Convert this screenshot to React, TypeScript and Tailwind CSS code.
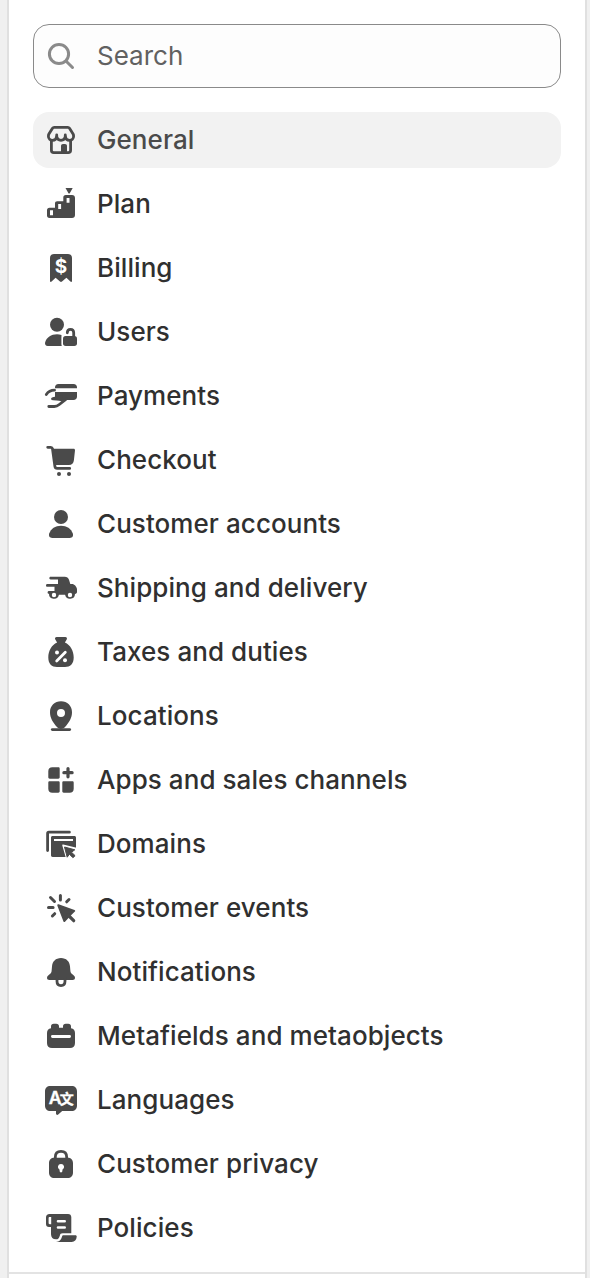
import type { ReactNode } from 'react'

type NavItem = {
  label: string
  icon: ReactNode
}

const line = {
  fill: 'none',
  stroke: 'currentColor',
  strokeWidth: 2.8,
  strokeLinecap: 'round',
  strokeLinejoin: 'round',
} as const

const navItems: NavItem[] = [
  {
    label: 'General',
    icon: (
      <>
        <path {...line} d="M13.2 7.4h13.6c.8 0 1.3.3 1.7.9l3.6 5.7c.4.7.5 1.4.5 2.2 0 2.500-1.900 4.100-4.100 4.100-2.200 0-3.900-1.500-4.200-3.500-.4 2-2.100 3.500-4.300 3.500s-3.900-1.500-4.300-3.500c-.3 2-2 3.500-4.200 3.500s-4.100-1.600-4.100-4.100c0-.8.1-1.500.5-2.200l3.600-5.700c.4-.6.9-.9 1.700-.9Z" />
        <path {...line} d="M15.700 15v2M24.300 15v2M10.400 20.500v9.700c0 1.500.9 2.400 2.400 2.400h14.400c1.500 0 2.400-.9 2.400-2.400v-9.700" />
        <path d="M20 26c0-1.200.8-2 2-2h2c1.200 0 2 .8 2 2v7h-6Z" />
      </>
    ),
  },
  {
    label: 'Plan',
    icon: (
      <>
        <path d="M24.500 4h7.200l-2.800 4.900c-.4.7-1.200.7-1.600 0Z" />
        <path
          fillRule="evenodd"
          d="M8.500 23.700H14v-4.200c0-1.400.8-2.200 2.200-2.200h6.100v-3.800c0-1.600.9-2.500 2.500-2.500h6.200c1.900 0 3 1.100 3 3v17c0 1.900-1.100 3-3 3H8.500C6.900 34 6 33.100 6 31.500v-5.300c0-1.600.9-2.500 2.500-2.500ZM9 26.300v5h3v-5ZM17.200 20v5h2.900v-5ZM25.600 14v4.800h2.900V14Z"
        />
      </>
    ),
  },
  {
    label: 'Billing',
    icon: (
      <>
        <path d="M9 10c0-2.500 1.500-4 4-4h14c2.500 0 4 1.500 4 4v23c0 1-.9 1.300-1.600.6l-4-3.800-4.400 3.700c-.7.500-1.300.500-2 0l-4.400-3.700-4 3.800C9.900 34.300 9 34 9 33Z" />
        <text x="20" y="24.800" textAnchor="middle" fill="white" fontSize="19" fontWeight="700">$</text>
      </>
    ),
  },
  {
    label: 'Users',
    icon: (
      <>
        <circle cx="16" cy="12.700" r="7" />
        <path d="M20.500 22.900c-1.400-.4-2.900-.6-4.500-.6-5.800 0-10.600 3.300-11.900 8.200-.5 1.900.7 3.500 2.700 3.500h14c-.3-.7-.4-1.300-.4-2v-5.500c0-1.200.1-2.300.1-3.600Z" />
        <rect x="22" y="24" width="14" height="10" rx="2.700" />
        <path {...line} d="M26.300 20.800c0-2.200 1.200-3.500 3.200-3.500s3.200 1.300 3.200 3.500V25" />
      </>
    ),
  },
  {
    label: 'Payments',
    icon: (
      <>
        <path d="M14 12.300V11.500C14 9.300 15.300 8 17.500 8h15c2.200 0 3.500 1.300 3.500 3.500v.8Z" />
        <path d="M14 16h22v4.500c0 2.200-1.300 3.500-3.500 3.500H20l-6-2Z" />
        <path {...line} d="M5.300 18.500c2-3 4.200-4.300 8.200-4.300M11.500 22.800c3.200-1.200 5.500-1.700 8.700-1.700M7.800 30.500h5.500c2.200 0 3.300-.6 5-2l6.500-5.200" />
        <path d="M12 21.500h15l-5 4.500c-2-1-5-1.500-10-1.700Z" />
      </>
    ),
  },
  {
    label: 'Checkout',
    icon: (
      <>
        <path {...line} d="M6.700 7.300h3.100c1 0 1.500.5 1.700 1.500l2.400 17.600c.2 1.300.9 2 2.200 2h12.600" />
        <path d="M12 8.700h20.500c1 0 1.600.6 1.500 1.600l-1.100 10c-.3 3-2 4.700-5 4.700H13.500Z" />
        <circle cx="18" cy="34" r="2" />
        <circle cx="28" cy="34" r="2" />
      </>
    ),
  },
  {
    label: 'Customer accounts',
    icon: (
      <>
        <circle cx="20" cy="13" r="7" />
        <path d="M20 21.700c5.700 0 10.200 3 11.800 7.900.8 2.500-.5 4.400-3 4.400H11.200c-2.500 0-3.800-1.900-3-4.400 1.600-4.900 6.100-7.900 11.800-7.900Z" />
      </>
    ),
  },
  {
    label: 'Shipping and delivery',
    icon: (
      <>
        <path
          fillRule="evenodd"
          d="M9.600 8.700h14.100c2.200 0 3.600 1 4.300 3l1.300 4.300h1.500c1.500 0 2.500.5 3.400 1.600l1 1.300c.6.800.8 1.500.8 2.500v2.300c0 1.300-.7 2.100-2 2.300a5 5 0 0 1-9.900.8h-6.200a5 5 0 0 1-9.900-1.100c-1 0-1.400-.6-1.400-1.300s.6-1.300 1.400-1.300h5.500v-4.400H6.300c-.8 0-1.300-.6-1.300-1.300S5.500 16 6.300 16H17v-4.600H9.600c-.8 0-1.300-.6-1.300-1.300s.5-1.400 1.300-1.400ZM13 24.800a2.200 2.200 0 1 0 0 4.400 2.200 2.200 0 0 0 0-4.400Zm16 0a2.200 2.200 0 1 0 0 4.400 2.200 2.200 0 0 0 0-4.400Z"
        />
      </>
    ),
  },
  {
    label: 'Taxes and duties',
    icon: (
      <>
        <path d="M15.700 5h8.600c1.400 0 2.100 1.200 1.400 2.400l-1.800 3.200c5.500 2.400 8.800 8.500 8.800 14.900 0 6.500-3.500 9.500-8.700 9.500h-8c-5.200 0-8.700-3-8.700-9.500 0-6.400 3.300-12.500 8.800-14.900l-1.800-3.200C13.600 6.200 14.300 5 15.700 5Z" />
        <path {...line} stroke="white" d="m24.300 20.300-8.600 8.600" />
        <circle cx="16" cy="20.500" r="2" fill="white" />
        <circle cx="24" cy="28.300" r="2" fill="white" />
      </>
    ),
  },
  {
    label: 'Locations',
    icon: (
      <>
        <path
          fillRule="evenodd"
          d="M20 5.300c6.300 0 11 4.600 11 10.900 0 5.500-2.700 10-7.200 15.100-2.200 2.300-5.400 2.300-7.600 0C11.700 26.200 9 21.700 9 16.200 9 9.900 13.700 5.300 20 5.300Zm0 7.700a4 4 0 1 0 0 8 4 4 0 0 0 0-8Z"
        />
        <path {...line} d="M11.300 33.600h17.400" />
      </>
    ),
  },
  {
    label: 'Apps and sales channels',
    icon: (
      <>
        <path d="M11.300 7.300h6c.9 0 1.400.5 1.400 1.400v8.600c0 .9-.5 1.400-1.400 1.400H8.700c-.9 0-1.400-.5-1.400-1.400v-6c0-2.500 1.500-4 4-4Z" />
        <path d="M8.700 21.300h8.600c.9 0 1.400.5 1.400 1.400v8.600c0 .9-.5 1.400-1.400 1.400h-6c-2.500 0-4-1.500-4-4v-6c0-.9.500-1.400 1.400-1.400Z" />
        <path d="M22.700 21.300h8.600c.9 0 1.400.5 1.400 1.400v6c0 2.500-1.500 4-4 4h-6c-.9 0-1.400-.5-1.400-1.400v-8.600c0-.9.500-1.400 1.400-1.400Z" />
        <path {...line} strokeWidth="3.200" d="M27 8.600v8.200M22.900 12.700h8.200" />
      </>
    ),
  },
  {
    label: 'Domains',
    icon: (
      <>
        <path {...line} d="M6.600 26.500V9.500c0-.8.500-1.300 1.300-1.300h20.500" />
        <path
          fillRule="evenodd"
          d="M11.700 12h21.600c1.100 0 1.700.6 1.700 1.700V33H11.700c-1.100 0-1.700-.6-1.700-1.700V13.700c0-1.100.6-1.700 1.700-1.700ZM13 15v2h19v-2Z"
        />
        <path d="m22 21.300 14.500 3.400v10.300H26Z" fill="white" stroke="white" strokeWidth="1.500" strokeLinejoin="round" />
        <path d="m23.500 23 10.300 2.800-3.300 2.400 3.600 3.500-2.200 2-3.500-3.500-2.200 3Z" stroke="currentColor" strokeLinejoin="round" />
      </>
    ),
  },
  {
    label: 'Customer events',
    icon: (
      <>
        <path {...line} strokeWidth="3" d="m9.500 9.500 4 4M19.400 7.500v4.600M28 11.500l-2.300 2.300M7.500 19.400h4.600M13.700 25.700l-2.300 2.300" />
        <path d="m17.300 17.300 15.900 5.600-4.600 4.500-5.300 5.600Z" stroke="currentColor" strokeWidth="2" strokeLinejoin="round" />
        <path {...line} strokeWidth="3.200" d="m27 27 5.700 5.700" />
      </>
    ),
  },
  {
    label: 'Notifications',
    icon: (
      <>
        <path d="M20 6c5.300 0 8.700 3.500 9 8.500l.4 4.500c.1 1.200.5 2 1.400 2.800l2 1.800c.8.700 1.200 1.300 1.200 2.200 0 1.400-.9 2.200-2.400 2.200H8.400C6.900 28 6 27.200 6 25.800c0-.9.4-1.500 1.200-2.200l2-1.800c.9-.8 1.300-1.600 1.400-2.800l.4-4.500c.3-5 3.700-8.500 9-8.500Z" />
        <path {...line} d="M16 27v2.300c0 2.600 1.600 4.300 4 4.300s4-1.700 4-4.300V27" />
      </>
    ),
  },
  {
    label: 'Metafields and metaobjects',
    icon: (
      <path
        fillRule="evenodd"
        d="M12.800 7.700h2.400c1.800 0 2.800 1 2.800 2.800v1.300h4v-1.300c0-1.800 1-2.800 2.800-2.800h2.400c1.800 0 2.800 1 2.800 2.800v1.700c2.600.4 4 2 4 4.700V27c0 3.200-1.800 5-5 5H11c-3.200 0-5-1.800-5-5V16.900c0-2.700 1.400-4.300 4-4.700v-1.700c0-1.800 1-2.800 2.800-2.800Zm-1.400 11.400a1.400 1.400 0 0 0 0 2.800h17.200a1.400 1.400 0 0 0 0-2.800Z"
      />
    ),
  },
  {
    label: 'Languages',
    icon: (
      <>
        <path d="M9.500 6h21C34 6 36 8 36 11.500v14c0 3.500-2 5.500-5.500 5.500h-9.300l-4 3.600c-.9.800-2.200.2-2.200-1V31H9.500C6 31 4 29 4 25.500v-14C4 8 6 6 9.500 6Z" />
        <text x="14.200" y="24.300" textAnchor="middle" fill="white" stroke="white" strokeWidth=".4" fontSize="17.500" fontWeight="600">A</text>
        <text x="25.800" y="24" textAnchor="middle" fill="white" stroke="white" strokeWidth=".3" fontSize="14" fontWeight="700" fontFamily='"Noto Sans CJK SC", sans-serif'>文</text>
      </>
    ),
  },
  {
    label: 'Customer privacy',
    icon: (
      <>
        <path {...line} d="M14.300 15v-1.800c0-3.600 2.200-5.800 5.700-5.800s5.700 2.200 5.700 5.800V15" />
        <path
          fillRule="evenodd"
          d="M13.500 13.700h13c3.500 0 5.500 2 5.500 5.500v9.300c0 3.500-2 5.500-5.500 5.500h-13C10 34 8 32 8 28.500v-9.300c0-3.500 2-5.500 5.500-5.500ZM20 20a3 3 0 0 0-1.400 5.700V27a1.400 1.400 0 0 0 2.800 0v-1.300A3 3 0 0 0 20 20Z"
        />
      </>
    ),
  },
  {
    label: 'Policies',
    icon: (
      <>
        <path
          fillRule="evenodd"
          d="M8.500 6H27c2.100 0 3.300 1.200 3.300 3.300v15.900h-8.600c-2 0-2.400.7-2.900 2.500-.7 2.500-1.700 3.600-3.800 3.600-3.200 0-5-1.900-5-5V19H8c-2 0-3-1-3-3V9.500C5 7.300 6.300 6 8.500 6ZM8.700 9c-.7 0-1.100.4-1.100 1.100v5c0 .7.4 1.100 1.100 1.100h1.500V9ZM17 12a1.300 1.300 0 0 0 0 2.600h6.700a1.300 1.300 0 0 0 0-2.600Zm0 6.200a1.300 1.300 0 0 0 0 2.600h6.700a1.300 1.300 0 0 0 0-2.600Z"
        />
        <path d="M22.500 27.300h11.800c1 0 1.500.5 1.400 1.500-.3 3.300-2 5.200-5 5.200H15c3.300-.4 5.200-2.200 6-5.300.3-1 .6-1.400 1.500-1.400Z" />
      </>
    ),
  },
]

function Icon({ children }: { children: ReactNode }) {
  return (
    <svg viewBox="0 0 40 40" className="size-10 shrink-0" fill="currentColor" aria-hidden="true">
      {children}
    </svg>
  )
}

export default function App() {
  return (
    <div className="h-[1278px] w-[590px] overflow-hidden bg-[#f0f0f0] pl-[7px] pr-[3px] font-['Inter',sans-serif]">
      <div className="flex h-full flex-col border-x-2 border-[#e0e0e0] bg-white">
        <div className="border-b-2 border-[#e3e3e3] px-6 pt-6 pb-4">
          {/* Search */}
          <label className="flex h-16 items-center gap-4 rounded-2xl border border-[#8a8a8a] bg-[#fdfdfd] pl-[7px]">
            <Icon>
              <g className="text-[#8a8a8a]">
                <circle {...line} strokeWidth="3" cx="18" cy="18" r="9.600" />
                <path {...line} strokeWidth="3" d="m25.200 25.200 6.300 6.300" />
              </g>
            </Icon>
            <input
              type="text"
              placeholder="Search"
              className="min-w-0 flex-1 bg-transparent pb-0.5 text-[26px] text-[#616161] outline-none placeholder:text-[#616161]"
            />
          </label>

          {/* Settings sections */}
          <nav className="mt-6 flex flex-col gap-2">
            {navItems.map((item, index) => (
              <a
                key={item.label}
                className={`flex h-14 items-center gap-4 rounded-2xl pl-2 text-[26px] font-[550] tracking-[0.07px] ${
                  index === 0 ? 'bg-[#f2f2f2] text-[#4a4a4a]' : 'text-[#303030]'
                }`}
              >
                <span className="text-[#4a4a4a]">
                  <Icon>{item.icon}</Icon>
                </span>
                <span className="pb-0.5">{item.label}</span>
              </a>
            ))}
          </nav>
        </div>
      </div>
    </div>
  )
}
